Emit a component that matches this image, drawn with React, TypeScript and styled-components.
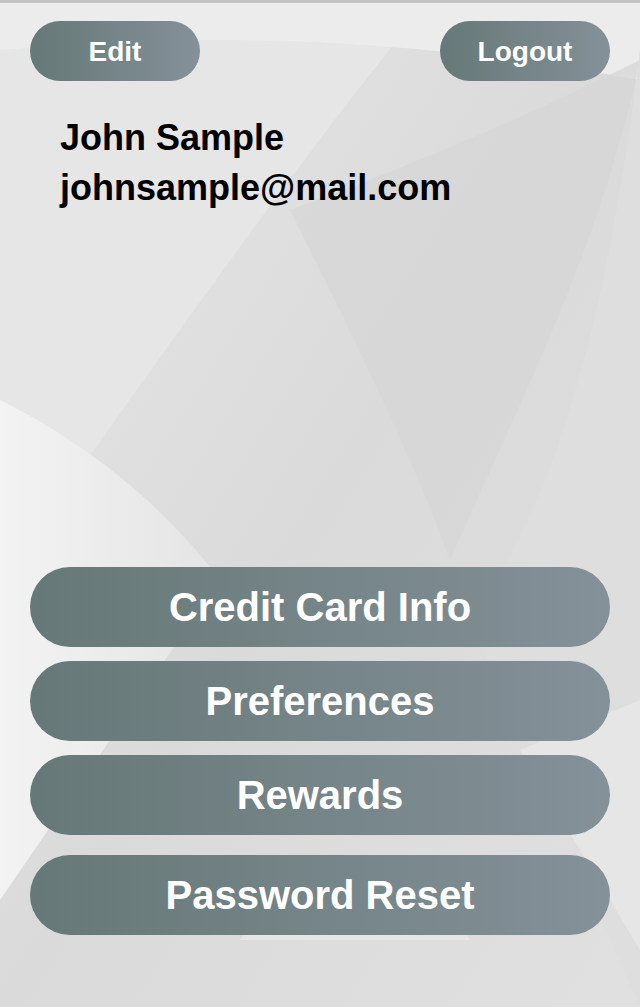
import React from 'react';
import styled, { createGlobalStyle } from 'styled-components';

const GlobalStyle = createGlobalStyle`
  html, body {
    margin: 0;
    padding: 0;
    background: #e2e2e2;
  }
  * {
    box-sizing: border-box;
  }
`;

const menuItems = [
  { label: 'Credit Card Info', gap: 0 },
  { label: 'Preferences', gap: 14 },
  { label: 'Rewards', gap: 14 },
  { label: 'Password Reset', gap: 20 },
];

const Backdrop: React.FC = () => (
  <BackdropSvg viewBox="0 0 640 1007" preserveAspectRatio="none">
    <defs>
      <linearGradient id="bgBase" x1="0" y1="0" x2="1" y2="1">
        <stop offset="0" stopColor="#e8e8e8" />
        <stop offset="0.5" stopColor="#dadada" />
        <stop offset="1" stopColor="#e0e0e0" />
      </linearGradient>
      <linearGradient id="sheen" x1="0" y1="0" x2="1" y2="0">
        <stop offset="0" stopColor="#f3f3f3" />
        <stop offset="1" stopColor="#e4e4e4" />
      </linearGradient>
    </defs>
    <rect width="640" height="1007" fill="url(#bgBase)" />
    <path d="M0 0 H430 C330 120 200 300 80 470 L0 560 Z" fill="#e6e6e6" />
    <path d="M0 50 C220 30 420 40 640 80 V0 H0 Z" fill="#ececec" />
    <path d="M0 400 C80 440 160 500 220 580 L0 900 Z" fill="url(#sheen)" />
    <path d="M290 210 C350 330 410 450 450 560 C520 400 600 250 640 60 V60 C520 120 400 170 290 210 Z" fill="#d6d6d6" opacity="0.7" />
    <path d="M640 50 C610 300 560 500 470 620 L640 1007 Z" fill="#dedede" />
    <path d="M520 750 L640 950 V700 Z" fill="#e6e6e6" />
    <path d="M240 940 L300 860 L420 860 L470 940 Z" fill="#e9e9e9" opacity="0.7" />
    <path d="M0 0 H640 V3 H0 Z" fill="#9a9a9a" opacity="0.5" />
  </BackdropSvg>
);

const App: React.FC = () => {
  return (
    <>
      <GlobalStyle />
      <Screen>
        <Backdrop />
        <Content>
          <TopBar>
            <PillButton>Edit</PillButton>
            <PillButton>Logout</PillButton>
          </TopBar>
          <Profile>
            <Name>John Sample</Name>
            <Email>johnsample@mail.com</Email>
          </Profile>
          <Menu>
            {menuItems.map((item) => (
              <MenuButton key={item.label} $gap={item.gap}>
                {item.label}
              </MenuButton>
            ))}
          </Menu>
        </Content>
      </Screen>
    </>
  );
};

export default App;

const Screen = styled.div`
  position: relative;
  width: 640px;
  height: 1007px;
  overflow: hidden;
  font-family: 'Liberation Sans', Arial, Helvetica, sans-serif;
`;

const BackdropSvg = styled.svg`
  position: absolute;
  inset: 0;
  width: 100%;
  height: 100%;
  z-index: 0;
`;

const Content = styled.div`
  position: relative;
  z-index: 1;
  display: flex;
  flex-direction: column;
  height: 100%;
  padding: 21px 30px 0;
`;

const TopBar = styled.div`
  display: flex;
  justify-content: space-between;
  align-items: center;
`;

const pill = `
  border: none;
  color: #ffffff;
  font-family: 'Liberation Sans', Arial, Helvetica, sans-serif;
  font-weight: 700;
  text-align: center;
  background: linear-gradient(to right, #667877, #849199);
  cursor: pointer;
  padding: 0;
`;

const PillButton = styled.button`
  ${pill}
  width: 170px;
  height: 60px;
  border-radius: 30px;
  font-size: 28px;
  padding-top: 2px;
`;

const Profile = styled.div`
  display: flex;
  flex-direction: column;
  gap: 10px;
  padding: 37px 0 0 30px;
  color: #000000;
  font-weight: 700;
  font-size: 36px;
  line-height: 40px;
`;

const Name = styled.div``;

const Email = styled.div``;

const Menu = styled.div`
  display: flex;
  flex-direction: column;
  margin-top: auto;
  margin-bottom: 72px;
`;

const MenuButton = styled.button<{ $gap: number }>`
  ${pill}
  margin-top: ${({ $gap }) => $gap}px;
  width: 580px;
  height: 80px;
  border-radius: 40px;
  font-size: 40px;
`;
